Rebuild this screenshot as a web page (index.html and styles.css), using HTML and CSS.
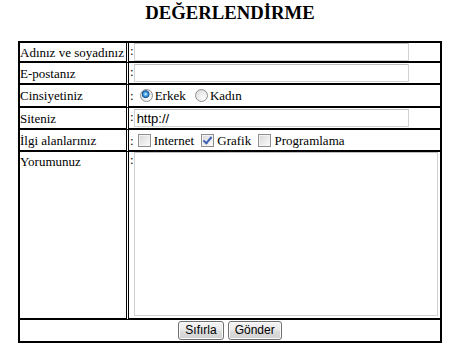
FILE: index.html
```html
<!DOCTYPE html>
<html lang="tr">
<head>
  <meta charset="UTF-8" />
  <meta name="viewport" content="width=device-width, initial-scale=1.0"/>
  <title>Değerlendirme</title>
  <link rel="stylesheet" href="styles.css">
</head>
<body>

  <div class="form-wrap">
    <h3>DEĞERLENDİRME</h3>

    <form>
      <table class="form-table">
        <tr class="row-sm">
          <td class="label">Adınız ve soyadınız</td>
          <td class="field">:<input type="text" class="text-input"></td>
        </tr>
        <tr class="row-md">
          <td class="label">E-postanız</td>
          <td class="field">:<input type="text" class="text-input"></td>
        </tr>
        <tr class="row-lg">
          <td class="label">Cinsiyetiniz</td>
          <td class="field">:<input type="radio" name="cinsiyet" class="radio" checked>Erkek <input type="radio" name="cinsiyet" class="radio">Kadın</td>
        </tr>
        <tr class="row-md">
          <td class="label">Siteniz</td>
          <td class="field">:<input type="text" class="text-input" value="http://"></td>
        </tr>
        <tr class="row-md">
          <td class="label">İlgi alanlarınız</td>
          <td class="field">:<input type="checkbox" class="check">Internet <input type="checkbox" class="check" checked>Grafik <input type="checkbox" class="check">Programlama</td>
        </tr>
        <tr class="row-comment">
          <td class="label">Yorumunuz</td>
          <td class="field">:<textarea class="comment"></textarea></td>
        </tr>
        <tr class="row-buttons">
          <td colspan="2">
            <div class="actions">
              <button type="reset" class="btn">Sıfırla</button>
              <button type="submit" class="btn">Gönder</button>
            </div>
          </td>
        </tr>
      </table>
    </form>
  </div>

</body>
</html>
```

FILE: styles.css
```css
body {
  margin: 0;
  font-family: "Liberation Serif", "Times New Roman", serif;
  font-size: 13px;
  color: #000;
  background-color: #fff;
}

.form-wrap {
  width: 424px;
  margin-left: 18px;
}

h3 {
  margin: 2px 0 17px;
  font-size: 18.72px;
  line-height: 22px;
  text-align: center;
}

form {
  margin: 0;
}

.form-table {
  width: 424px;
  table-layout: fixed;
  border-collapse: separate;
  border-spacing: 0;
  border-top: 2px solid #000;
  border-left: 2px solid #000;
}

.form-table td {
  padding: 0;
  line-height: 15px;
  border-right: 2px solid #000;
  border-bottom: 2px solid #000;
  white-space: nowrap;
}

.form-table td.label {
  width: 106px;
  border-right: 3px double #000;
}

.form-table td.field {
  padding-left: 1px;
}

.row-sm td {
  height: 18px;
}

.row-md td {
  height: 20px;
}

.row-lg td {
  height: 21px;
}

.row-comment td {
  height: 164px;
  vertical-align: top;
}

.row-comment td.label {
  padding-top: 2px;
}

.row-buttons td {
  height: 21px;
}

.actions {
  display: flex;
  justify-content: center;
  align-items: center;
  gap: 4px;
  height: 21px;
}

.text-input {
  box-sizing: border-box;
  width: 275px;
  height: 18px;
  margin: 0;
  padding: 0 2px;
  border: 1px solid #d2d2d2;
  border-top-color: #bdbdbd;
  font-family: "Liberation Sans", Arial, sans-serif;
  font-size: 13px;
  vertical-align: middle;
  outline: none;
}

.comment {
  box-sizing: border-box;
  width: 304px;
  height: 164px;
  margin: 0;
  padding: 1px;
  border: 1px solid #d2d2d2;
  border-top-color: #bdbdbd;
  vertical-align: top;
  resize: none;
  outline: none;
}

/* windows 7 style radio and checkbox */
.radio {
  appearance: none;
  box-sizing: border-box;
  width: 13px;
  height: 13px;
  margin: 0 2px 0 6px;
  border: 1px solid #8e8f8f;
  border-radius: 50%;
  background: radial-gradient(circle at 65% 70%, #fdfdfd 0, #e2e2e2 70%, #cfcfcf 100%);
  vertical-align: -2px;
}

.radio:checked {
  background:
    radial-gradient(circle at 42% 38%, #d9f1ff 0, #5fb4ef 1.5px, #1f6fb8 3px, #164f8c 3.6px, transparent 4.2px),
    radial-gradient(circle at 65% 70%, #fdfdfd 0, #e2e2e2 70%, #cfcfcf 100%);
}

.check {
  appearance: none;
  position: relative;
  box-sizing: border-box;
  width: 13px;
  height: 13px;
  margin: 0 3px 0 4px;
  border: 1px solid #8e8f8f;
  background: linear-gradient(135deg, #d6d6d6 0%, #ececec 55%, #fbfbfb 100%);
  box-shadow: inset 0 0 0 1px #f4f4f4;
  vertical-align: -2px;
}

.check:checked::after {
  content: "";
  position: absolute;
  left: 3px;
  top: 0;
  width: 3px;
  height: 7px;
  border-right: 2px solid #3f62b8;
  border-bottom: 2px solid #3f62b8;
  transform: rotate(40deg);
}

.btn {
  box-sizing: border-box;
  height: 19px;
  margin: 0;
  padding: 0 6px;
  border: 1px solid #707070;
  border-radius: 3px;
  background: linear-gradient(#f3f3f3 0%, #ebebeb 48%, #dddddd 52%, #d0d0d0 100%);
  box-shadow: inset 0 0 0 1px #fbfbfb;
  font-family: "Liberation Sans", Arial, sans-serif;
  font-size: 12px;
  line-height: 15px;
  color: #000;
}
```
